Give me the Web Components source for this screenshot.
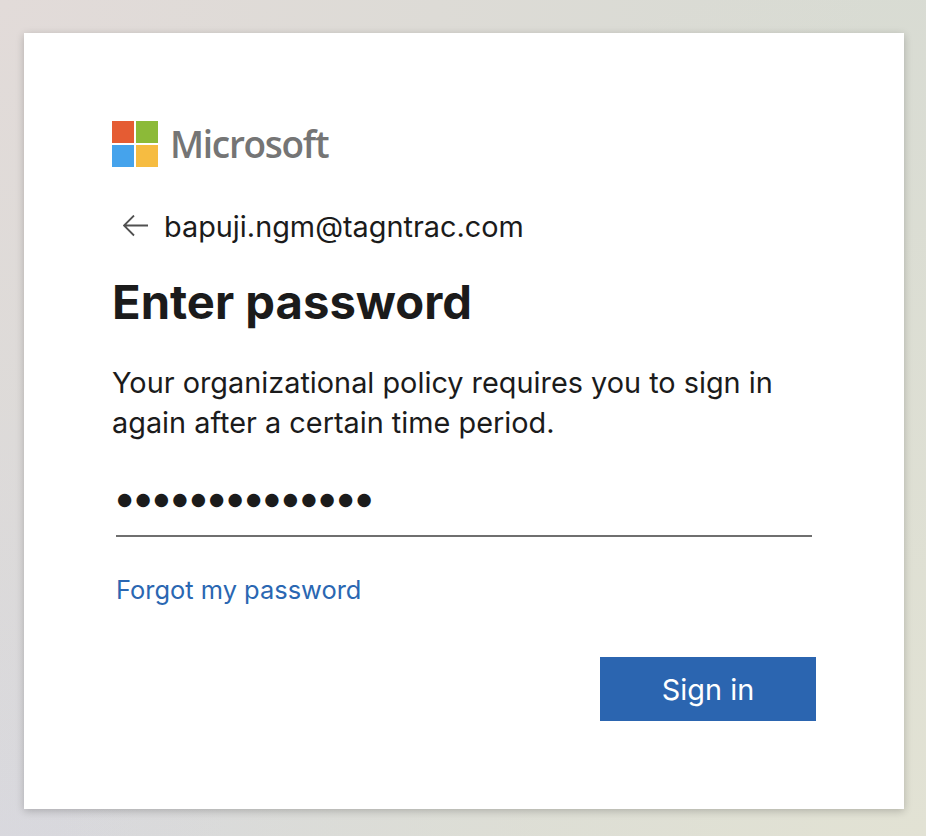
<!DOCTYPE html>
<html>
<head>
<meta charset="utf-8">
<title>Sign in</title>
<style>
  html, body { margin: 0; height: 100%; }
  body {
    width: 926px;
    height: 836px;
    overflow: hidden;
    font-family: Inter, "Liberation Sans", sans-serif;
    color: #1b1b1b;
    background:
      radial-gradient(circle at 0 0, #e2dbd9 0, rgba(226,219,217,0) 70%),
      radial-gradient(circle at 100% 100%, #e2e2d4 0, rgba(226,226,212,0) 70%),
      radial-gradient(circle at 0 100%, #d8d8de 0, rgba(216,216,222,0) 70%),
      #d8dbd3;
  }
</style>
</head>
<body>
<login-page>
  <login-card>
    <ms-logo></ms-logo>
    <back-identity>bapuji.ngm@tagntrac.com</back-identity>
    <h-title>Enter password</h-title>
    <p-note>Your organizational policy requires you to sign in again after a certain time period.</p-note>
    <password-field count="14"></password-field>
    <link-text>Forgot my password</link-text>
    <primary-button>Sign in</primary-button>
  </login-card>
</login-page>

<script>
class LoginPage extends HTMLElement {
  constructor() {
    super();
    this.attachShadow({ mode: "open" });
    this.shadowRoot.innerHTML = `
    <style>
      :host { display: block; padding: 33px 22px 27px 24px; }
    </style>
    <slot></slot>`;
  }
}

class LoginCard extends HTMLElement {
  constructor() {
    super();
    this.attachShadow({ mode: "open" });
    this.shadowRoot.innerHTML = `
    <style>
      :host {
        display: flex;
        flex-direction: column;
        box-sizing: border-box;
        width: 880px;
        height: 776px;
        padding: 88px 88px 0 88px;
        background: #fff;
        box-shadow: 0 2px 8px rgba(0, 0, 0, 0.22);
      }
    </style>
    <slot></slot>`;
  }
}

class MsLogo extends HTMLElement {
  constructor() {
    super();
    this.attachShadow({ mode: "open" });
    this.shadowRoot.innerHTML = `
    <style>
      :host { display: flex; align-items: center; gap: 12px; height: 46px; }
      svg { display: block; flex: none; }
      span {
        font: 600 37px/46px "Open Sans", sans-serif;
        letter-spacing: -1.3px;
        color: #757575;
      }
    </style>
    <svg width="46" height="46" viewBox="0 0 46 46">
      <rect width="22" height="22" fill="#e55c33"/>
      <rect x="24" width="22" height="22" fill="#8cba38"/>
      <rect y="24" width="22" height="22" fill="#45a3ec"/>
      <rect x="24" y="24" width="22" height="22" fill="#f6bc41"/>
    </svg>
    <span>Microsoft</span>`;
  }
}

class BackIdentity extends HTMLElement {
  constructor() {
    super();
    this.attachShadow({ mode: "open" });
    this.shadowRoot.innerHTML = `
    <style>
      :host {
        display: flex;
        align-items: center;
        gap: 15px;
        margin-top: 42px;
        height: 36px;
        padding-left: 11px;
        font-size: 28.85px;
        line-height: 36px;
      }
      svg { display: block; flex: none; }
    </style>
    <svg width="26" height="24" viewBox="0 0 26 24" fill="none" stroke="#505050" stroke-width="1.8">
      <path d="M1 10.5H25M11 .5L1 10.5L11 20.5"/>
    </svg>
    <slot></slot>`;
  }
}

class HTitle extends HTMLElement {
  constructor() {
    super();
    this.attachShadow({ mode: "open" });
    this.shadowRoot.innerHTML = `
    <style>
      :host {
        display: block;
        margin-top: 27px;
        font-size: 47.2px;
        font-weight: 700;
        line-height: 60px;
      }
    </style>
    <slot></slot>`;
  }
}

class PNote extends HTMLElement {
  constructor() {
    super();
    this.attachShadow({ mode: "open" });
    this.shadowRoot.innerHTML = `
    <style>
      :host {
        display: block;
        margin-top: 31px;
        width: 680px;
        font-size: 28.85px;
        line-height: 40px;
      }
    </style>
    <slot></slot>`;
  }
}

class PasswordField extends HTMLElement {
  constructor() {
    super();
    this.attachShadow({ mode: "open" });
    const dots = "\u25CF".repeat(Number(this.getAttribute("count")) || 0);
    this.shadowRoot.innerHTML = `
    <style>
      :host {
        display: block;
        box-sizing: border-box;
        width: 696px;
        height: 57px;
        margin: 37px 0 0 4px;
        border-bottom: 2px solid #6f6f6f;
        padding-left: 1px;
        font: 17.5px/38px "DejaVu Sans", sans-serif;
        letter-spacing: 3.15px;
        color: #1b1b1b;
      }
    </style>
    <span>${dots}</span>`;
  }
}

class LinkText extends HTMLElement {
  constructor() {
    super();
    this.attachShadow({ mode: "open" });
    this.shadowRoot.innerHTML = `
    <style>
      :host {
        display: block;
        margin: 35px 0 0 4px;
        font-size: 25.45px;
        line-height: 36px;
        color: #2a67b2;
      }
    </style>
    <slot></slot>`;
  }
}

class PrimaryButton extends HTMLElement {
  constructor() {
    super();
    this.attachShadow({ mode: "open" });
    this.shadowRoot.innerHTML = `
    <style>
      :host {
        display: flex;
        align-items: center;
        justify-content: center;
        align-self: flex-end;
        width: 216px;
        height: 64px;
        margin: 49px 0 0 0;
        background: #2b65b0;
        color: #fff;
        font-size: 28.85px;
      }
    </style>
    <slot></slot>`;
  }
}

customElements.define("login-page", LoginPage);
customElements.define("login-card", LoginCard);
customElements.define("ms-logo", MsLogo);
customElements.define("back-identity", BackIdentity);
customElements.define("h-title", HTitle);
customElements.define("p-note", PNote);
customElements.define("password-field", PasswordField);
customElements.define("link-text", LinkText);
customElements.define("primary-button", PrimaryButton);
</script>
</body>
</html>
